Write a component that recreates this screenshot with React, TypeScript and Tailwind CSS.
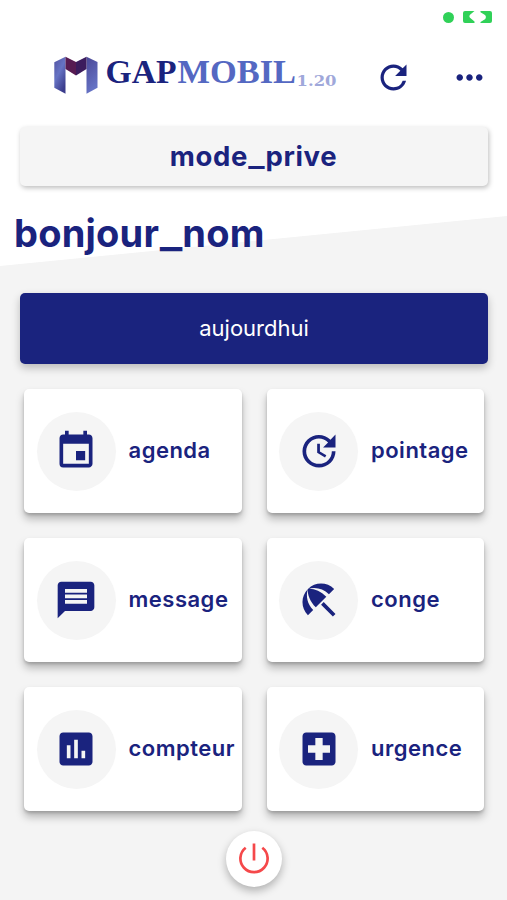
import React from "react"
import type { IconType } from "react-icons"
import {
  MdAssessment,
  MdBeachAccess,
  MdEvent,
  MdLocalHospital,
  MdMessage,
  MdMoreHoriz,
  MdRefresh,
  MdUpdate,
} from "react-icons/md"

const tiles: { label: string; icon: IconType }[] = [
  { label: "agenda", icon: MdEvent },
  { label: "pointage", icon: MdUpdate },
  { label: "message", icon: MdMessage },
  { label: "conge", icon: MdBeachAccess },
  { label: "compteur", icon: MdAssessment },
  { label: "urgence", icon: MdLocalHospital },
]

function StatusBar() {
  return (
    <div className="flex h-[34px] items-center justify-end gap-[9px] pr-[15px]">
      <span className="h-[11px] w-[11px] rounded-full bg-[#30d158]"></span>
      <svg width="29" height="12" viewBox="0 0 29 12" fill="#30d158">
        <path d="M2 0H11.500L7 3.800C6.200 4.500 6.200 6 7 6.800L11.500 10.500V12H2Q0 12 0 10V2Q0 0 2 0Z" />
        <path d="M17.500 0H27Q29 0 29 2V10Q29 12 27 12H17.500V11L22 8.200C23.200 7.200 23.200 5 22 4L17.500 1.200Z" />
      </svg>
    </div>
  )
}

function Logo() {
  return (
    <svg width="286" height="56" viewBox="0 -6 286 56">
      <defs>
        <linearGradient id="left" x1="0" y1="0" x2="0.600" y2="1">
          <stop offset="0" stopColor="#5252a0" />
          <stop offset="0.500" stopColor="#6673c4" />
          <stop offset="1" stopColor="#3b3c8c" />
        </linearGradient>
        <linearGradient id="right" x1="0" y1="0" x2="0.300" y2="1">
          <stop offset="0" stopColor="#4a4796" />
          <stop offset="1" stopColor="#6674c6" />
        </linearGradient>
      </defs>
      <path d="M1.300 7.300L12.500 1.700V38.700L1.300 32.700Z" fill="url(#left)" />
      <path d="M33.500 1.700L44.500 7V32.700L33.500 38.700Z" fill="url(#right)" />
      <path d="M12.500 1.700L23 7V20.500L12.500 14Z" fill="#571b52" />
      <path d="M33.500 1.700L23 7V20.500L33.500 14Z" fill="#3c1c5d" />
      <g fontFamily="'Liberation Serif', serif" fontWeight="700" fontSize="33">
        <text x="52.500" y="27.500" fill="#1a237e" textLength="71" lengthAdjust="spacingAndGlyphs">GAP</text>
        <text x="124.500" y="27.500" fill="#5468c2" textLength="118.500" lengthAdjust="spacingAndGlyphs">MOBIL</text>
      </g>
      <text
        x="243.500"
        y="31"
        fill="#9fa8da"
        fontFamily="'DejaVu Serif', serif"
        fontWeight="700"
        fontSize="14"
        textLength="40"
        lengthAdjust="spacingAndGlyphs"
      >
        1.20
      </text>
    </svg>
  )
}

function Tile({ label, icon: Icon }: { label: string; icon: IconType }) {
  return (
    <button className="flex h-[124px] items-center rounded-[5px] bg-white pl-[12.500px] shadow-[0_6px_9px_rgba(0,0,0,0.26),0_2px_3px_rgba(0,0,0,0.16)]">
      <span className="flex h-[79px] w-[79px] shrink-0 items-center justify-center rounded-full bg-[#f5f5f5]">
        <Icon size={44} />
      </span>
      <span className="ml-[13px] pb-[2px] text-[22px] leading-7 font-semibold tracking-[0.500px]">
        {label}
      </span>
    </button>
  )
}

function App() {
  return (
    <div className="h-[900px] w-[507px] overflow-hidden bg-[linear-gradient(174.370deg,#ffffff_264.300px,#f4f4f4_265.100px)] font-['Inter',sans-serif] text-[#1a237e]">
      <StatusBar />
      <header className="flex h-[86px] items-center pl-[53px]">
        <Logo />
        <button className="ml-[35px]">
          <MdRefresh size={39} />
        </button>
        <button className="ml-[37px]">
          <MdMoreHoriz size={39} />
        </button>
      </header>

      <div className="mx-[19.500px] mt-[7px] flex h-[59px] items-center justify-center rounded-[5px] bg-[#f5f5f5] pt-px text-[27.500px] font-bold tracking-[0.600px] shadow-[1px_2px_5px_rgba(0,0,0,0.26)]">
        mode<span className="mx-[2px] inline-block scale-x-125">_</span>prive
      </div>
      <h1 className="mt-[23px] ml-[14px] text-[38px] leading-[48px] font-bold tracking-[0.200px]">
        bonjour<span className="mx-[2.500px] inline-block scale-x-125">_</span>nom
      </h1>

      <button className="mt-9 ml-5 flex h-[71px] w-[468px] items-center justify-center rounded-[5px] bg-[#1a237e] pb-px text-[22px] text-white shadow-[0_4px_8px_rgba(0,0,0,0.24)]">
        aujourdhui
      </button>

      <main className="mt-[25px] ml-6 grid w-[460px] grid-cols-2 gap-[25px]">
        {tiles.map((tile) => (
          <Tile key={tile.label} label={tile.label} icon={tile.icon} />
        ))}
      </main>

      <button className="mx-auto mt-5 flex h-14 w-14 items-center justify-center rounded-full bg-white shadow-[0_4px_8px_rgba(0,0,0,0.28)]">
        <svg width="32" height="32" viewBox="0 0 32 32" fill="none" stroke="#f5484a" strokeWidth="2.700">
          <path d="M16 0.500V17.500" />
          <path d="M7.700 4.800A13.600 13.600 0 1 0 24.300 4.800" />
        </svg>
      </button>
    </div>
  )
}

export default App
